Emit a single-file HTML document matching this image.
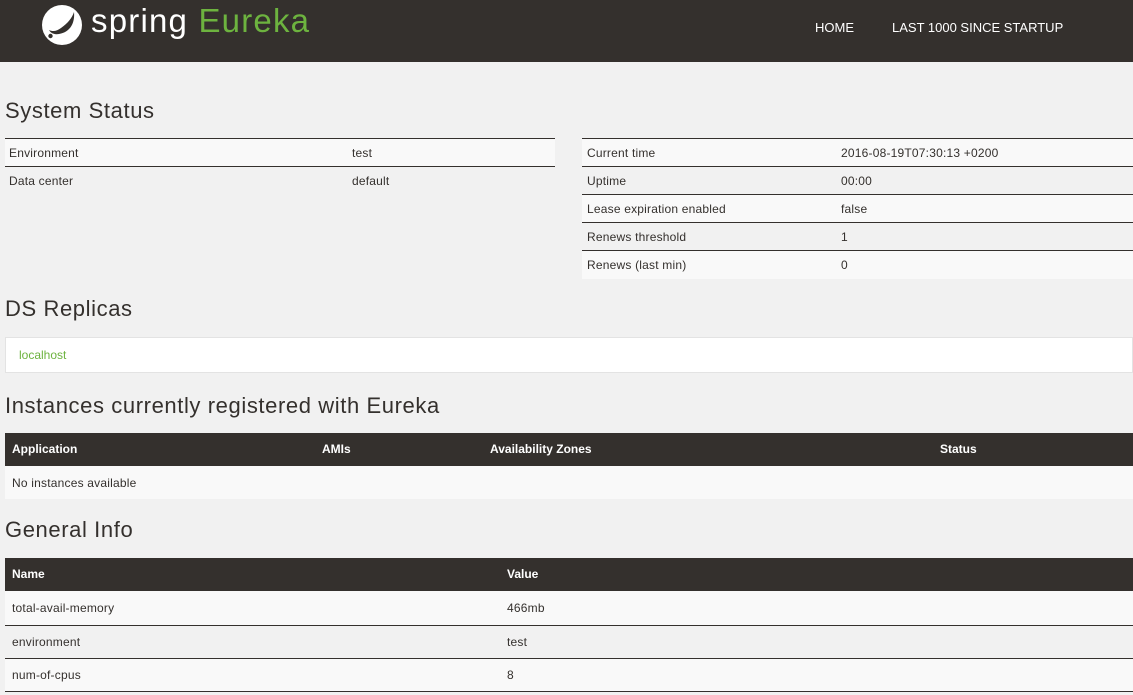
<!DOCTYPE html>
<html><head><meta charset="utf-8"><style>
*{margin:0;padding:0;box-sizing:border-box}
body{width:1133px;height:695px;background:#f1f1f1;font-family:"Liberation Sans",sans-serif;color:#34302d;position:relative;overflow:hidden}
.hdr{position:absolute;left:0;top:0;width:1133px;height:62px;background:#34302d}
.abs{position:absolute;white-space:nowrap}
h2{position:absolute;font-weight:normal;font-size:22px;color:#34302d;left:5px;letter-spacing:0.6px;white-space:nowrap}
.row{position:absolute;height:28px}
.row span{position:absolute;top:7px;font-size:12px;letter-spacing:0.2px}
.line{position:absolute;height:1px;background:#34302d}
.dark{position:absolute;background:#34302d;color:#fff;font-weight:bold;font-size:12px}
.dark span{position:absolute;top:9px}
</style></head><body>
<div class="hdr">
<svg class="abs" style="left:41px;top:4px" width="42" height="42" viewBox="0 0 42 42">
<circle cx="21" cy="21" r="20" fill="#fff"/>
<path d="M33 8 C34 18 30 28 18 30 C12 31 9 28 8 26 C12 28 16 27 20 24 C27 19 31 14 33 8Z" fill="#34302d"/>
<circle cx="9.5" cy="32" r="2.2" fill="#34302d"/>
</svg>
<div class="abs" style="left:91px;top:2px;font-size:33px;color:#fff;letter-spacing:1.2px">spring <span style="color:#6db33f">Eureka</span></div>
<div class="abs" style="left:815px;top:20px;font-size:13px;color:#fff">HOME</div>
<div class="abs" style="left:892px;top:20px;font-size:13px;color:#fff">LAST 1000 SINCE STARTUP</div>
</div>

<h2 style="top:98px">System Status</h2>
<div class="line" style="left:5px;top:138px;width:550px"></div>
<div class="row" style="left:5px;top:139px;width:550px;background:#f9f9f9"><span style="left:4px">Environment</span><span style="left:347px">test</span></div>
<div class="line" style="left:5px;top:166px;width:550px"></div>
<div class="row" style="left:5px;top:167px;width:550px"><span style="left:4px">Data center</span><span style="left:347px">default</span></div>

<div class="line" style="left:582px;top:138px;width:551px"></div>
<div class="row" style="left:582px;top:139px;width:551px;background:#f9f9f9"><span style="left:5px">Current time</span><span style="left:259px">2016-08-19T07:30:13 +0200</span></div>
<div class="line" style="left:582px;top:166px;width:551px"></div>
<div class="row" style="left:582px;top:167px;width:551px"><span style="left:5px">Uptime</span><span style="left:259px">00:00</span></div>
<div class="line" style="left:582px;top:194px;width:551px"></div>
<div class="row" style="left:582px;top:195px;width:551px;background:#f9f9f9"><span style="left:5px">Lease expiration enabled</span><span style="left:259px">false</span></div>
<div class="line" style="left:582px;top:222px;width:551px"></div>
<div class="row" style="left:582px;top:223px;width:551px"><span style="left:5px">Renews threshold</span><span style="left:259px">1</span></div>
<div class="line" style="left:582px;top:250px;width:551px"></div>
<div class="row" style="left:582px;top:251px;width:551px;background:#f9f9f9"><span style="left:5px">Renews (last min)</span><span style="left:259px">0</span></div>

<h2 style="top:296px">DS Replicas</h2>
<div class="abs" style="left:5px;top:337px;width:1128px;height:36px;background:#fff;border:1px solid #e3e3e3"><span class="abs" style="left:13px;top:10px;font-size:12px;color:#6db33f">localhost</span></div>

<h2 style="top:393px">Instances currently registered with Eureka</h2>
<div class="dark" style="left:5px;top:433px;width:1128px;height:33px"><span style="left:7px">Application</span><span style="left:317px">AMIs</span><span style="left:485px">Availability Zones</span><span style="left:935px">Status</span></div>
<div class="row" style="left:5px;top:466px;width:1128px;height:33px;background:#f9f9f9"><span style="left:7px;top:10px">No instances available</span></div>

<h2 style="top:517px">General Info</h2>
<div class="dark" style="left:5px;top:558px;width:1128px;height:33px"><span style="left:7px">Name</span><span style="left:502px">Value</span></div>
<div class="row" style="left:5px;top:591px;width:1128px;height:34px;background:#f9f9f9"><span style="left:7px;top:10px">total-avail-memory</span><span style="left:502px;top:10px">466mb</span></div>
<div class="line" style="left:5px;top:625px;width:1128px"></div>
<div class="row" style="left:5px;top:626px;width:1128px;height:32px"><span style="left:7px;top:9px">environment</span><span style="left:502px;top:9px">test</span></div>
<div class="line" style="left:5px;top:658px;width:1128px"></div>
<div class="row" style="left:5px;top:659px;width:1128px;height:32px;background:#f9f9f9"><span style="left:7px;top:9px">num-of-cpus</span><span style="left:502px;top:9px">8</span></div>
<div class="line" style="left:5px;top:691px;width:1128px"></div>
</body></html>
